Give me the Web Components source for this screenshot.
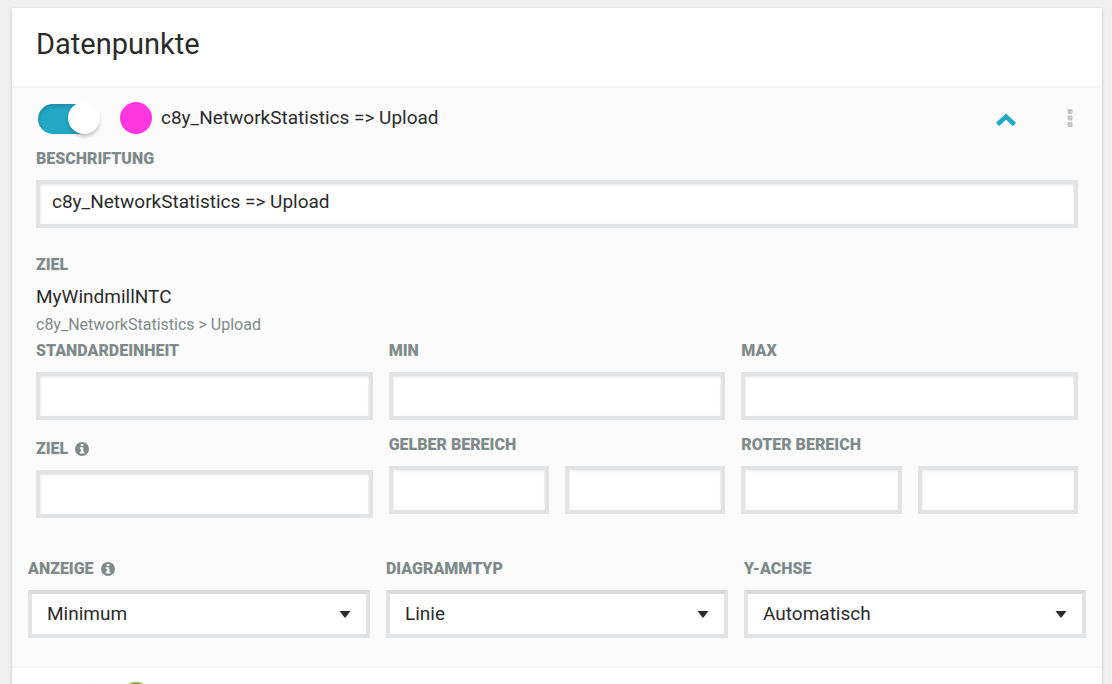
<!DOCTYPE html>
<html lang="de">
<head>
<meta charset="utf-8">
<meta name="viewport" content="width=device-width, initial-scale=1">
<title>Datenpunkte</title>
<style>
  html { scrollbar-width: none; background: #f0f0f0; }
  body { margin: 0; padding: 8px 10px 24px 12px; font: 19px/24px Roboto, "Liberation Sans", sans-serif; color: #2b2b2b; }
</style>
</head>
<body>
<dp-card heading="Datenpunkte">
  <dp-item name="c8y_NetworkStatistics =&gt; Upload" color="#ff37e0" open>
    <dp-field label="Beschriftung" value="c8y_NetworkStatistics =&gt; Upload"></dp-field>
    <dp-target label="Ziel" device="MyWindmillNTC" path="c8y_NetworkStatistics &gt; Upload"></dp-target>
    <dp-row>
      <dp-field label="Standardeinheit"></dp-field>
      <dp-field label="Min"></dp-field>
      <dp-field label="Max"></dp-field>
    </dp-row>
    <dp-row spaced>
      <dp-field label="Ziel" info></dp-field>
      <dp-field label="Gelber Bereich" range></dp-field>
      <dp-field label="Roter Bereich" range></dp-field>
    </dp-row>
    <dp-row wide>
      <dp-select label="Anzeige" info><option>Minimum</option></dp-select>
      <dp-select label="Diagrammtyp"><option>Linie</option></dp-select>
      <dp-select label="Y-Achse"><option>Automatisch</option></dp-select>
    </dp-row>
  </dp-item>
  <dp-item color="#8fae46"></dp-item>
</dp-card>

<script>
const LABEL_CSS = `
  label, .label { display: flex; align-items: center; gap: 7px; padding-top: 1px; margin-bottom: 11px; font-size: 16px; line-height: 20px;
    font-weight: 900; text-transform: uppercase; color: #7f8a8a; white-space: nowrap; }
  :host([info]) label { padding-top: 5px; }
  svg { flex: none; }`;
const INFO_ICON = `<svg width="14" height="14" viewBox="0 0 14 14" aria-hidden="true">
  <circle cx="7" cy="7" r="7" fill="#7f8a8a"/>
  <path fill="#fbfbfb" d="M5.8 2h2.5v2H5.8zM4.8 5.2h3.5v4.6h1.1v1.7H4.8V9.8h1.1V6.9H4.8z"/></svg>`;

class DpElement extends HTMLElement {
  connectedCallback() {
    if (this.shadowRoot) return;
    this.attachShadow({ mode: 'open' }).innerHTML = this.render();
    this.ready();
  }
  attr(name) {
    return (this.getAttribute(name) || '').replace(/&/g, '&amp;').replace(/</g, '&lt;').replace(/>/g, '&gt;').replace(/"/g, '&quot;');
  }
  ready() {}
}

class DpCard extends DpElement {
  render() {
    return `<style>
      :host { display: block; background: #fff; box-shadow: 0 1px 3px rgba(0,0,0,.22); }
      header { padding: 18px 24px 24px; border-bottom: 2px solid #f3f3f3; }
      h1 { margin: 0; font-size: 29px; line-height: 36px; font-weight: 400; }
    </style>
    <header><h1>${this.attr('heading')}</h1></header><slot></slot>`;
  }
}

class DpItem extends DpElement {
  render() {
    const open = this.hasAttribute('open');
    return `<style>
      :host { display: block; padding: 14px 24px 28px; border-bottom: 2px solid #f3f3f3; }
      :host([open]) { background: #fbfbfb; }
      .head { display: flex; align-items: center; height: 32px; padding: 0 2px; margin-bottom: 14px; }
      .dot { width: 32px; height: 32px; margin: 0 9px 0 20px; border-radius: 50%; background: var(--dot); }
      .name { flex: 1; }
      button { display: flex; justify-content: center; padding: 0; border: 0; background: none; width: 32px; cursor: pointer; }
      .more { width: 12px; margin: 0 0 0 42px; }
      .toggle { margin-top: 4px; }
    </style>
    <div class="head">
      <dp-switch></dp-switch>
      <span class="dot" style="--dot:${this.attr('color')}"></span>
      <span class="name">${this.attr('name')}</span>
      ${open ? `<button class="toggle" type="button" aria-label="Einklappen" aria-expanded="true">
        <svg width="22" height="14" viewBox="0 0 22 14"><path d="M2.500 11.500 11 3.500l8.500 8" fill="none" stroke="#22a8c6" stroke-width="4.500"/></svg>
      </button>
      <button class="more" type="button" aria-label="Mehr">
        <svg width="6" height="18" viewBox="0 0 6 18" fill="#c5c6c6"><rect width="5" height="5" rx="1" x="0.500"/><rect width="5" height="5" rx="1" x="0.500" y="6.500"/><rect width="5" height="5" rx="1" x="0.500" y="13"/></svg>
      </button>` : ''}
    </div>
    <slot></slot>`;
  }
}

class DpSwitch extends DpElement {
  render() {
    return `<style>
      :host { display: block; }
      label { display: grid; align-items: center; width: 62px; height: 32px; cursor: pointer; }
      input { grid-area: 1 / 1; appearance: none; width: 60px; height: 30px; margin: 2px 0 0; border-radius: 15px;
        background: #c8caca; box-shadow: inset 0 2px 4px rgba(0,0,0,.18); }
      input:checked { background: #22a8c6; }
      .thumb { grid-area: 1 / 1; width: 32px; height: 32px; border-radius: 50%; background: #fff; box-shadow: 0 3px 4px -1px rgba(0,0,0,.3); }
      input:checked + .thumb { justify-self: end; }
    </style>
    <label><input type="checkbox" role="switch" aria-label="Aktiv" checked><span class="thumb"></span></label>`;
  }
}

class DpField extends DpElement {
  render() {
    return `<style>${LABEL_CSS}
      :host { display: block; min-width: 0; }
      .inputs { display: grid; grid-auto-flow: column; grid-auto-columns: minmax(0, 1fr); gap: 16px; }
      input { box-sizing: border-box; width: 100%; height: 48px; margin: 0; padding: 0 12px 6px; border: 4px solid #e2e3e4; border-radius: 0;
        background: #fff; box-shadow: inset 0 1px 3px rgba(0,0,0,.1); font: inherit; color: inherit; outline: 0; }
      input:focus { border-color: #22a8c6; }
    </style>
    <label for="a">${this.attr('label')}${this.hasAttribute('info') ? INFO_ICON : ''}</label>
    <div class="inputs"><input id="a" type="text" value="${this.attr('value')}">${this.hasAttribute('range') ? `<input type="text" aria-label="${this.attr('label')}">` : ''}</div>`;
  }
}

class DpSelect extends DpElement {
  render() {
    return `<style>${LABEL_CSS}
      :host { display: block; min-width: 0; }
      .box { position: relative; }
      select { appearance: none; display: block; box-sizing: border-box; width: 100%; height: 48px; margin: 0; padding: 0 40px 0 15px;
        border: 4px solid #e2e3e4; border-top-color: #d9dbdc; border-radius: 0; background: #fff; font: inherit; color: inherit; }
      .box svg { position: absolute; right: 19px; top: 21px; pointer-events: none; }
    </style>
    <label for="a">${this.attr('label')}${this.hasAttribute('info') ? INFO_ICON : ''}</label>
    <div class="box"><select id="a"></select>
      <svg width="12" height="7" viewBox="0 0 12 7" aria-hidden="true"><path d="M.5 0h11L6.500 6.500h-1z" fill="#2b2b2b"/></svg></div>`;
  }
  ready() {
    this.shadowRoot.querySelector('select').append(...this.querySelectorAll('option'));
  }
}

class DpTarget extends DpElement {
  render() {
    return `<style>${LABEL_CSS}
      :host { display: block; padding: 26px 0 5px; }
      .label { margin-bottom: 10px; }
      p { margin: 0 0 6px; }
      small { display: block; font-size: 16px; line-height: 20px; color: #7f8a8a; }
    </style>
    <div class="label">${this.attr('label')}</div>
    <p>${this.attr('device')}</p>
    <small>${this.attr('path')}</small>`;
  }
}

class DpRow extends DpElement {
  render() {
    return `<style>
      :host { display: grid; grid-template-columns: repeat(3, minmax(0, 1fr)); gap: 16px; }
      :host([spaced]) { margin-top: 14px; }
      :host([wide]) { margin: 36px -8px 0; align-items: end; }
    </style><slot></slot>`;
  }
}

customElements.define('dp-switch', DpSwitch);
customElements.define('dp-field', DpField);
customElements.define('dp-select', DpSelect);
customElements.define('dp-target', DpTarget);
customElements.define('dp-row', DpRow);
customElements.define('dp-item', DpItem);
customElements.define('dp-card', DpCard);
</script>
</body>
</html>
